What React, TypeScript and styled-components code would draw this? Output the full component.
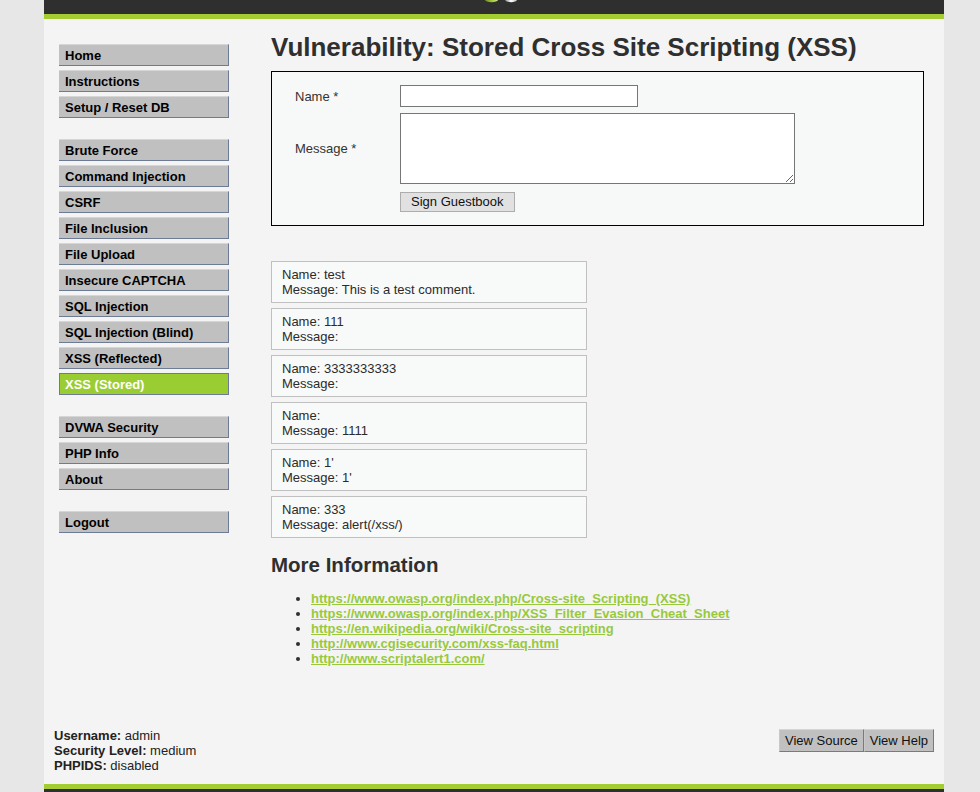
import React from "react";
import styled, { createGlobalStyle, css } from "styled-components";

const Global = createGlobalStyle`
  html, body {
    margin: 0;
    padding: 0;
    background: #e7e7e7;
    overflow: hidden;
  }
  body {
    font-family: "Liberation Sans", Arial, Helvetica, sans-serif;
    font-size: 13px;
    color: #2f2f2f;
  }
  * { box-sizing: border-box; }
`;

const GREEN = "#a4cd32";
const LINK = "#98c93c";

const Page = styled.div`
  width: 900px;
  margin-left: 44px;
`;

const Header = styled.div`
  height: 19px;
  background: #2f2f2f;
  border-bottom: 5px solid ${GREEN};
  display: flex;
  align-items: flex-start;
  padding-left: 441px;
`;

const Main = styled.div`
  height: 765px;
  background: #f4f4f4;
  display: flex;
  flex-direction: column;
`;

const TopRow = styled.div`
  display: flex;
  align-items: flex-start;
`;

const Menu = styled.div`
  width: 227px;
  flex-shrink: 0;
  padding: 25px 0 0 15px;
`;

const MenuGroup = styled.ul`
  list-style: none;
  margin: 0 0 21px 0;
  padding: 0;
`;

const MenuItem = styled.li<{ $selected?: boolean }>`
  display: block;
  width: 170px;
  height: 22px;
  margin-bottom: 4px;
  padding: 3px 0 0 6px;
  line-height: 15px;
  font-weight: bold;
  font-size: 13px;
  color: #000;
  background: #c0c0c0;
  border-top: 1px solid #d6d6d6;
  border-right: 1px solid #6e7b94;
  border-bottom: 1px solid #6e7b94;
  ${(p) =>
    p.$selected &&
    css`
      background: #9acd32;
      color: #fff;
      border: 1px solid #6e7b94;
      padding-left: 5px;
    `}
`;

const Body = styled.div`
  flex: 1;
  padding: 13px 20px 0 0;
`;

const Title = styled.h1`
  font-size: 26px;
  line-height: 30px;
  font-weight: bold;
  margin: 0 0 9px 0;
  color: #2f2f2f;
`;

const FormBox = styled.div`
  border: 1px solid #000;
  background: #f7f8f8;
  padding: 13px 0 13px 23px;
`;

const FormGrid = styled.div`
  display: grid;
  grid-template-columns: 105px auto;
  row-gap: 6px;
  justify-items: start;
`;

const Label = styled.label`
  align-self: center;
  color: #333;
  line-height: 15px;
`;

const TextInput = styled.input`
  width: 238px;
  height: 22px;
  border: 1px solid #767676;
  background: #fff;
  padding: 1px 2px;
  font: inherit;
  margin: 0;
`;

const TextArea = styled.textarea`
  width: 395px;
  height: 71px;
  border: 1px solid #767676;
  background: #fff;
  padding: 2px;
  font: inherit;
  margin: 0;
  display: block;
`;

const SubmitButton = styled.button`
  margin-top: 2px;
  height: 20px;
  padding: 0 10px;
  border: 1px solid #adadad;
  background: #e1e1e1;
  font-family: "Liberation Sans", Arial, sans-serif;
  font-size: 13px;
  color: #111;
  line-height: 16px;
`;

const Comments = styled.div`
  margin-top: 35px;
`;

const Comment = styled.div`
  width: 316px;
  border: 1px solid #c0c0c0;
  background: #f8f9f9;
  padding: 5px 10px;
  line-height: 15px;
  margin-bottom: 5px;
  color: #2b2b2b;
`;

const SubTitle = styled.h2`
  font-size: 20.5px;
  line-height: 24px;
  font-weight: bold;
  margin: 15px 0 14px 0;
  color: #2f2f2f;
`;

const LinkList = styled.ul`
  margin: 0;
  padding-left: 40px;
  line-height: 15px;
  color: #2f2f2f;
`;

const Link = styled.a`
  color: ${LINK};
  font-weight: bold;
  text-decoration: underline;
`;

const FooterRow = styled.div`
  margin-top: auto;
  padding: 0 10px 11px 10px;
  display: flex;
  justify-content: space-between;
  align-items: flex-start;
`;

const Info = styled.div`
  line-height: 15px;
  color: #222;
`;

const Buttons = styled.div`
  display: flex;
  margin-top: 1px;
`;

const GreyButton = styled.button`
  height: 23px;
  padding: 0 5px;
  background: #c0c0c0;
  border: none;
  border-top: 1px solid #d6d6d6;
  border-left: 1px solid #c8c8c8;
  border-right: 1px solid #6e7b94;
  border-bottom: 1px solid #6e7b94;
  font-family: "Liberation Sans", Arial, sans-serif;
  font-size: 13px;
  color: #111;
  line-height: 20px;
`;

const Footer = styled.div`
  height: 8px;
  background: #2f2f2f;
  border-top: 5px solid ${GREEN};
`;

const Logo = () => (
  <svg width="34" height="3" viewBox="0 0 34 3">
    <defs>
      <linearGradient id="lg" x1="0" x2="1">
        <stop offset="0" stopColor="#6f8f1e" />
        <stop offset="0.6" stopColor="#a6ce39" />
        <stop offset="1" stopColor="#cfe39a" />
      </linearGradient>
      <linearGradient id="lw" x1="0" x2="1">
        <stop offset="0" stopColor="#8a8a8a" />
        <stop offset="0.5" stopColor="#ffffff" />
        <stop offset="1" stopColor="#bdbdbd" />
      </linearGradient>
    </defs>
    <path d="M0 0 H13 Q12 2 6.5 2.2 Q1 2 0 0Z" fill="url(#lg)" />
    <path d="M20 0 H32 Q31 2 26 2.2 Q21 2 20 0Z" fill="url(#lw)" />
  </svg>
);

const menuGroups: string[][] = [
  ["Home", "Instructions", "Setup / Reset DB"],
  [
    "Brute Force",
    "Command Injection",
    "CSRF",
    "File Inclusion",
    "File Upload",
    "Insecure CAPTCHA",
    "SQL Injection",
    "SQL Injection (Blind)",
    "XSS (Reflected)",
    "XSS (Stored)",
  ],
  ["DVWA Security", "PHP Info", "About"],
  ["Logout"],
];

const comments = [
  { name: "test", message: "This is a test comment." },
  { name: "111", message: "" },
  { name: "3333333333", message: "" },
  { name: "", message: "1111" },
  { name: "1'", message: "1'" },
  { name: "333", message: "alert(/xss/)" },
];

const links = [
  "https://www.owasp.org/index.php/Cross-site_Scripting_(XSS)",
  "https://www.owasp.org/index.php/XSS_Filter_Evasion_Cheat_Sheet",
  "https://en.wikipedia.org/wiki/Cross-site_scripting",
  "http://www.cgisecurity.com/xss-faq.html",
  "http://www.scriptalert1.com/",
];

export default function App() {
  return (
    <>
      <Global />
      <Page>
        <Header>
          <Logo />
        </Header>
        <Main>
          <TopRow>
            <Menu>
              {menuGroups.map((g, i) => (
                <MenuGroup key={i}>
                  {g.map((item) => (
                    <MenuItem key={item} $selected={item === "XSS (Stored)"}>
                      {item}
                    </MenuItem>
                  ))}
                </MenuGroup>
              ))}
            </Menu>
            <Body>
              <Title>Vulnerability: Stored Cross Site Scripting (XSS)</Title>
              <FormBox>
                <FormGrid>
                  <Label>Name *</Label>
                  <TextInput type="text" />
                  <Label>Message *</Label>
                  <TextArea />
                  <span />
                  <SubmitButton>Sign Guestbook</SubmitButton>
                </FormGrid>
              </FormBox>
              <Comments>
                {comments.map((c, i) => (
                  <Comment key={i}>
                    Name: {c.name}
                    <br />
                    Message: {c.message}
                  </Comment>
                ))}
              </Comments>
              <SubTitle>More Information</SubTitle>
              <LinkList>
                {links.map((l) => (
                  <li key={l}>
                    <Link href="#">{l}</Link>
                  </li>
                ))}
              </LinkList>
            </Body>
          </TopRow>
          <FooterRow>
            <Info>
              <b>Username:</b> admin
              <br />
              <b>Security Level:</b> medium
              <br />
              <b>PHPIDS:</b> disabled
            </Info>
            <Buttons>
              <GreyButton>View Source</GreyButton>
              <GreyButton>View Help</GreyButton>
            </Buttons>
          </FooterRow>
        </Main>
        <Footer />
      </Page>
    </>
  );
}
